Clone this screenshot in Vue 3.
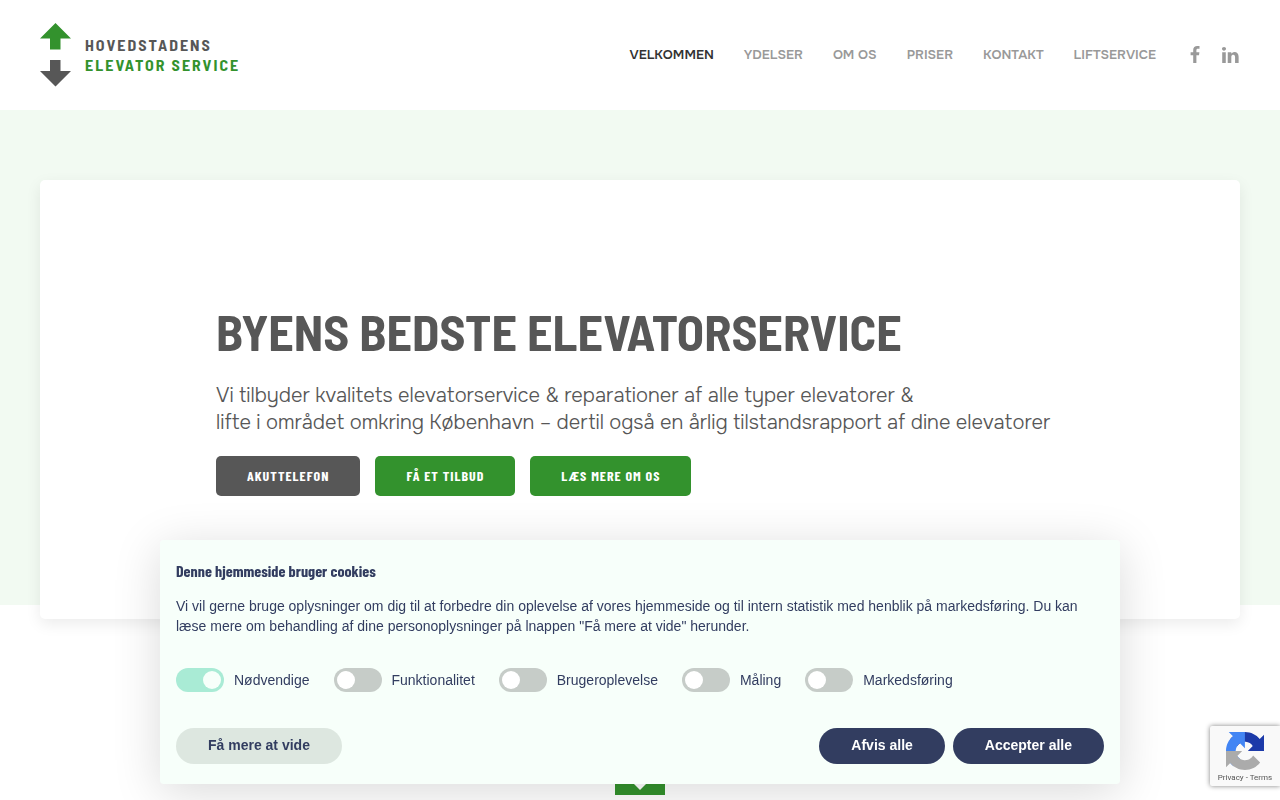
<script setup>
import { ref } from "vue";
const links = ["Velkommen", "Ydelser", "Om os", "Priser", "Kontakt", "Liftservice"];
const current = ref("Velkommen");
const showCookies = ref(true);
const categories = ref([
    { id: "necessary", label: "Nødvendige", on: true, locked: true },
    { id: "functional", label: "Funktionalitet", on: false },
    { id: "experience", label: "Brugeroplevelse", on: false },
    { id: "measure", label: "Måling", on: false },
    { id: "marketing", label: "Markedsføring", on: false },
]);
function closeCookies(all) {
    categories.value.forEach((c) => {
        c.on = all || !!c.locked;
    });
    showCookies.value = false;
}
</script>

<template>
    <header class="header">
        <a href="#" class="logo">
            <svg width="31" height="64" viewBox="0 0 31 64" aria-hidden="true">
                <path d="M15.500 0L31 15.500H20.500V26.500H10V15.500H0z" fill="#33922d" />
                <path d="M10 37h10.500v11H31L15.500 63.500 0 48h10z" fill="#575757" />
            </svg>
            <span class="logo-text">
                <span>HOVEDSTADENS</span>
                <span class="logo-green">ELEVATOR SERVICE</span>
            </span>
        </a>
        <div class="header-right">
            <nav class="nav">
                <a
                    v-for="link in links"
                    :key="link"
                    href="#"
                    :class="{ active: link == current }"
                    @click.prevent="current = link"
                >{{ link }}</a>
            </nav>
            <div class="social">
                <a href="#" aria-label="Facebook">
                    <svg width="20" height="20" viewBox="0 0 20 20" fill="currentColor">
                        <path d="M11.400 18V10.300h2.600l.400-3.100h-3V5.300c0-.900.300-1.500 1.500-1.500h1.600V1.100C14.200 1 13.300 1 12.200 1 9.900 1 8.200 2.400 8.200 4.900v2.300H5.600v3.100h2.600V18z" />
                    </svg>
                </a>
                <a href="#" aria-label="LinkedIn">
                    <svg width="20" height="20" viewBox="0 0 20 20" fill="currentColor">
                        <path d="M5.770 17.890V7.160H2.210v10.730h3.560zM3.990 5.700c1.240 0 2.020-.820 2.020-1.850C5.990 2.800 5.240 2 4.020 2 2.800 2 2 2.800 2 3.850c0 1.030.770 1.850 1.970 1.850zM7.750 17.890h3.560V11.900c0-.320.020-.640.120-.870.260-.640.840-1.310 1.830-1.310 1.290 0 1.810.990 1.810 2.440v5.730h3.560v-6.150c0-3.300-1.760-4.830-4.100-4.830-1.920 0-2.770 1.080-3.240 1.810h.020V7.160H7.750c.05 1.010 0 10.730 0 10.730z" />
                    </svg>
                </a>
            </div>
        </div>
    </header>

    <main>
        <section class="hero">
            <div class="hero-card">
                <h1>BYENS BEDSTE ELEVATORSERVICE</h1>
                <p>
                    Vi tilbyder kvalitets elevatorservice &amp; reparationer af alle typer elevatorer &amp;<br />
                    lifte i området omkring København – dertil også en årlig tilstandsrapport af dine elevatorer
                </p>
                <div class="hero-buttons">
                    <a href="#" class="btn btn-dark">Akuttelefon</a>
                    <a href="#" class="btn">Få et tilbud</a>
                    <a href="#" class="btn">Læs mere om os</a>
                </div>
            </div>
        </section>
        <section class="next">
            <a href="#" class="next-link" aria-label="Videre">
                <svg width="50" height="50" viewBox="0 0 50 50" aria-hidden="true">
                    <path d="M18 38h14l-7 7z" fill="#fff" />
                </svg>
            </a>
        </section>
    </main>

    <div class="recaptcha">
        <svg width="38" height="38" viewBox="0 0 64 64" aria-hidden="true">
            <path d="M64 31.955l-.033-1.370V4.687l-7.160 7.160C50.948 4.674 42.033.093 32.050.093c-10.390 0-19.622 4.960-25.474 12.640l11.736 11.860c1.150-2.127 2.784-3.954 4.760-5.338 2.055-1.604 4.967-2.916 8.988-2.916.486 0 .860.057 1.137.164 4.982.393 9.300 3.142 11.843 7.133l-8.307 8.307L64 31.955" fill="#1c3aa9" />
            <path d="M31.862.094l-1.370.033H4.594l7.160 7.160C4.580 13.147 0 22.060 0 32.046c0 10.390 4.960 19.622 12.640 25.474L24.500 45.784c-2.127-1.150-3.954-2.784-5.338-4.760-1.604-2.055-2.916-4.967-2.916-8.988 0-.486.057-.860.164-1.137.393-4.982 3.142-9.300 7.133-11.843l8.307 8.307.012-27.270" fill="#4285f4" />
            <path d="M.001 32.045l.033 1.370v25.898l7.160-7.160c5.860 7.173 14.774 11.754 24.760 11.754 10.390 0 19.622-4.960 25.474-12.640l-11.736-11.860c-1.150 2.127-2.784 3.954-4.760 5.338-2.055 1.604-4.967 2.916-8.988 2.916-.486 0-.860-.057-1.137-.164-4.982-.393-9.300-3.142-11.843-7.133l8.307-8.307-27.270-.012" fill="#ababab" />
        </svg>
        <div class="recaptcha-links">
            <a href="#">Privacy</a> - <a href="#">Terms</a>
        </div>
    </div>

    <div v-if="showCookies" class="cookies" role="dialog" aria-labelledby="cookie-title">
        <h2 id="cookie-title">Denne hjemmeside bruger cookies</h2>
        <p>
            Vi vil gerne bruge oplysninger om dig til at forbedre din oplevelse af vores hjemmeside og til intern
            statistik med henblik på markedsføring. Du kan læse mere om behandling af dine personoplysninger på
            lnappen "Få mere at vide" herunder.
        </p>
        <div class="toggles">
            <div v-for="c in categories" :key="c.id" class="toggle">
                <input :id="c.id" v-model="c.on" type="checkbox" :disabled="c.locked" />
                <label :for="c.id">{{ c.label }}</label>
            </div>
        </div>
        <div class="cookie-buttons">
            <button type="button" class="more">Få mere at vide</button>
            <button type="button" @click="closeCookies(false)">Afvis alle</button>
            <button type="button" @click="closeCookies(true)">Accepter alle</button>
        </div>
    </div>
</template>

<style>
body {
    margin: 0;
    background: #fff;
    overflow-x: hidden;
}
</style>

<style scoped>
* {
    box-sizing: border-box;
}
a {
    text-decoration: none;
    color: inherit;
}
.header {
    display: flex;
    justify-content: space-between;
    align-items: center;
    min-height: 110px;
    padding: 0 40px;
    font-family: "Onest", "Inter", sans-serif;
}
.logo {
    display: flex;
    align-items: center;
    gap: 14px;
}
.logo-text {
    display: flex;
    flex-direction: column;
    font-family: "Barlow Semi Condensed", "Barlow Condensed", "Roboto", sans-serif;
    font-size: 16px;
    line-height: 20px;
    font-weight: 700;
    letter-spacing: 2px;
    color: #575757;
}
.logo-text .logo-green {
    color: #33922d;
}
.header-right {
    display: flex;
    align-items: center;
    gap: 29px;
    color: #999;
}
.nav {
    display: flex;
    gap: 30px;
    font-size: 13px;
    font-weight: 600;
    line-height: 18px;
    text-transform: uppercase;
}
.nav .active {
    color: #333;
}
.social {
    display: flex;
    gap: 15px;
}
.social svg {
    display: block;
}
.hero {
    background: #f2faf2;
    padding: 70px 40px 0;
    height: 495px;
}
.hero-card {
    background: #fff;
    border-radius: 5px;
    box-shadow: 0 5px 15px rgba(0, 0, 0, 0.08);
    padding: 123px 176px;
    color: #575757;
}
h1 {
    margin: 0 0 23px;
    font-family: "Barlow Semi Condensed", "Barlow Condensed", "Roboto", sans-serif;
    font-size: 50px;
    line-height: 56px;
    font-weight: 700;
    white-space: nowrap;
}
.hero-card p {
    margin: 0 0 20px;
    font-family: "Onest", "Inter", sans-serif;
    font-size: 20px;
    line-height: 27px;
    font-weight: 300;
    white-space: nowrap;
}
.hero-buttons {
    display: flex;
    gap: 15px;
}
.btn {
    padding: 0 31px;
    border-radius: 5px;
    background: #33922d;
    color: #fff;
    font-family: "Barlow Condensed", "Roboto", sans-serif;
    font-size: 14px;
    line-height: 40px;
    font-weight: 700;
    letter-spacing: 1px;
    text-transform: uppercase;
}
.btn-dark {
    background: #575757;
}
.next {
    display: flex;
    justify-content: center;
    padding-top: 140px;
}
.next-link {
    background: #33922d;
    height: 50px;
}
.recaptcha {
    position: fixed;
    right: 0;
    bottom: 14px;
    width: 70px;
    height: 60px;
    padding-top: 6px;
    border-radius: 2px 0 0 2px;
    background: #f9f9f9;
    box-shadow: 0 0 5px gray;
    text-align: center;
}
.recaptcha svg {
    display: block;
    margin: 0 auto;
}
.recaptcha-links {
    font-family: "Roboto", sans-serif;
    font-size: 8px;
    line-height: 15px;
    color: #555;
    white-space: nowrap;
}
.cookies {
    position: fixed;
    left: 0;
    right: 0;
    bottom: 16px;
    width: 75%;
    max-width: 960px;
    margin: 0 auto;
    padding: 20px 16px;
    border-radius: 4px;
    background: #f7fffa;
    box-shadow: 0 8px 48px rgba(0, 0, 0, 0.15);
    color: #323d60;
    font-family: "Liberation Sans", Arial, sans-serif;
    font-size: 14px;
    line-height: 20px;
}
.cookies h2 {
    margin: 0 0 14px;
    font-family: "Barlow Condensed", "Roboto", sans-serif;
    font-size: 16px;
    line-height: 22px;
    font-weight: 700;
}
.cookies p {
    margin: 0 0 32px;
}
.toggles {
    display: flex;
    flex-wrap: wrap;
    gap: 24px;
    margin-bottom: 36px;
}
.toggle {
    display: flex;
    align-items: center;
    gap: 10px;
    height: 24px;
}
.toggle input {
    appearance: none;
    display: flex;
    width: 48px;
    height: 24px;
    margin: 0;
    padding: 3px;
    border-radius: 12px;
    background: #c6ccc8;
    cursor: pointer;
}
.toggle input::before {
    content: "";
    width: 18px;
    height: 18px;
    border-radius: 50%;
    background: #fff;
}
.toggle input:checked {
    justify-content: flex-end;
    background: #3ad1a5;
}
.toggle input:disabled {
    background: #a9ebd5;
}
.toggle input:disabled::before {
    background: #f7fffa;
}
.cookie-buttons {
    display: flex;
    gap: 8px;
}
.cookie-buttons button {
    height: 36px;
    padding: 0 32px 2px;
    border: 0;
    border-radius: 18px;
    background: #323d60;
    color: #fff;
    font: bold 14px "Liberation Sans", Arial, sans-serif;
    cursor: pointer;
}
.cookie-buttons .more {
    margin-right: auto;
    background: #dde7e0;
    color: #323d60;
}
</style>
